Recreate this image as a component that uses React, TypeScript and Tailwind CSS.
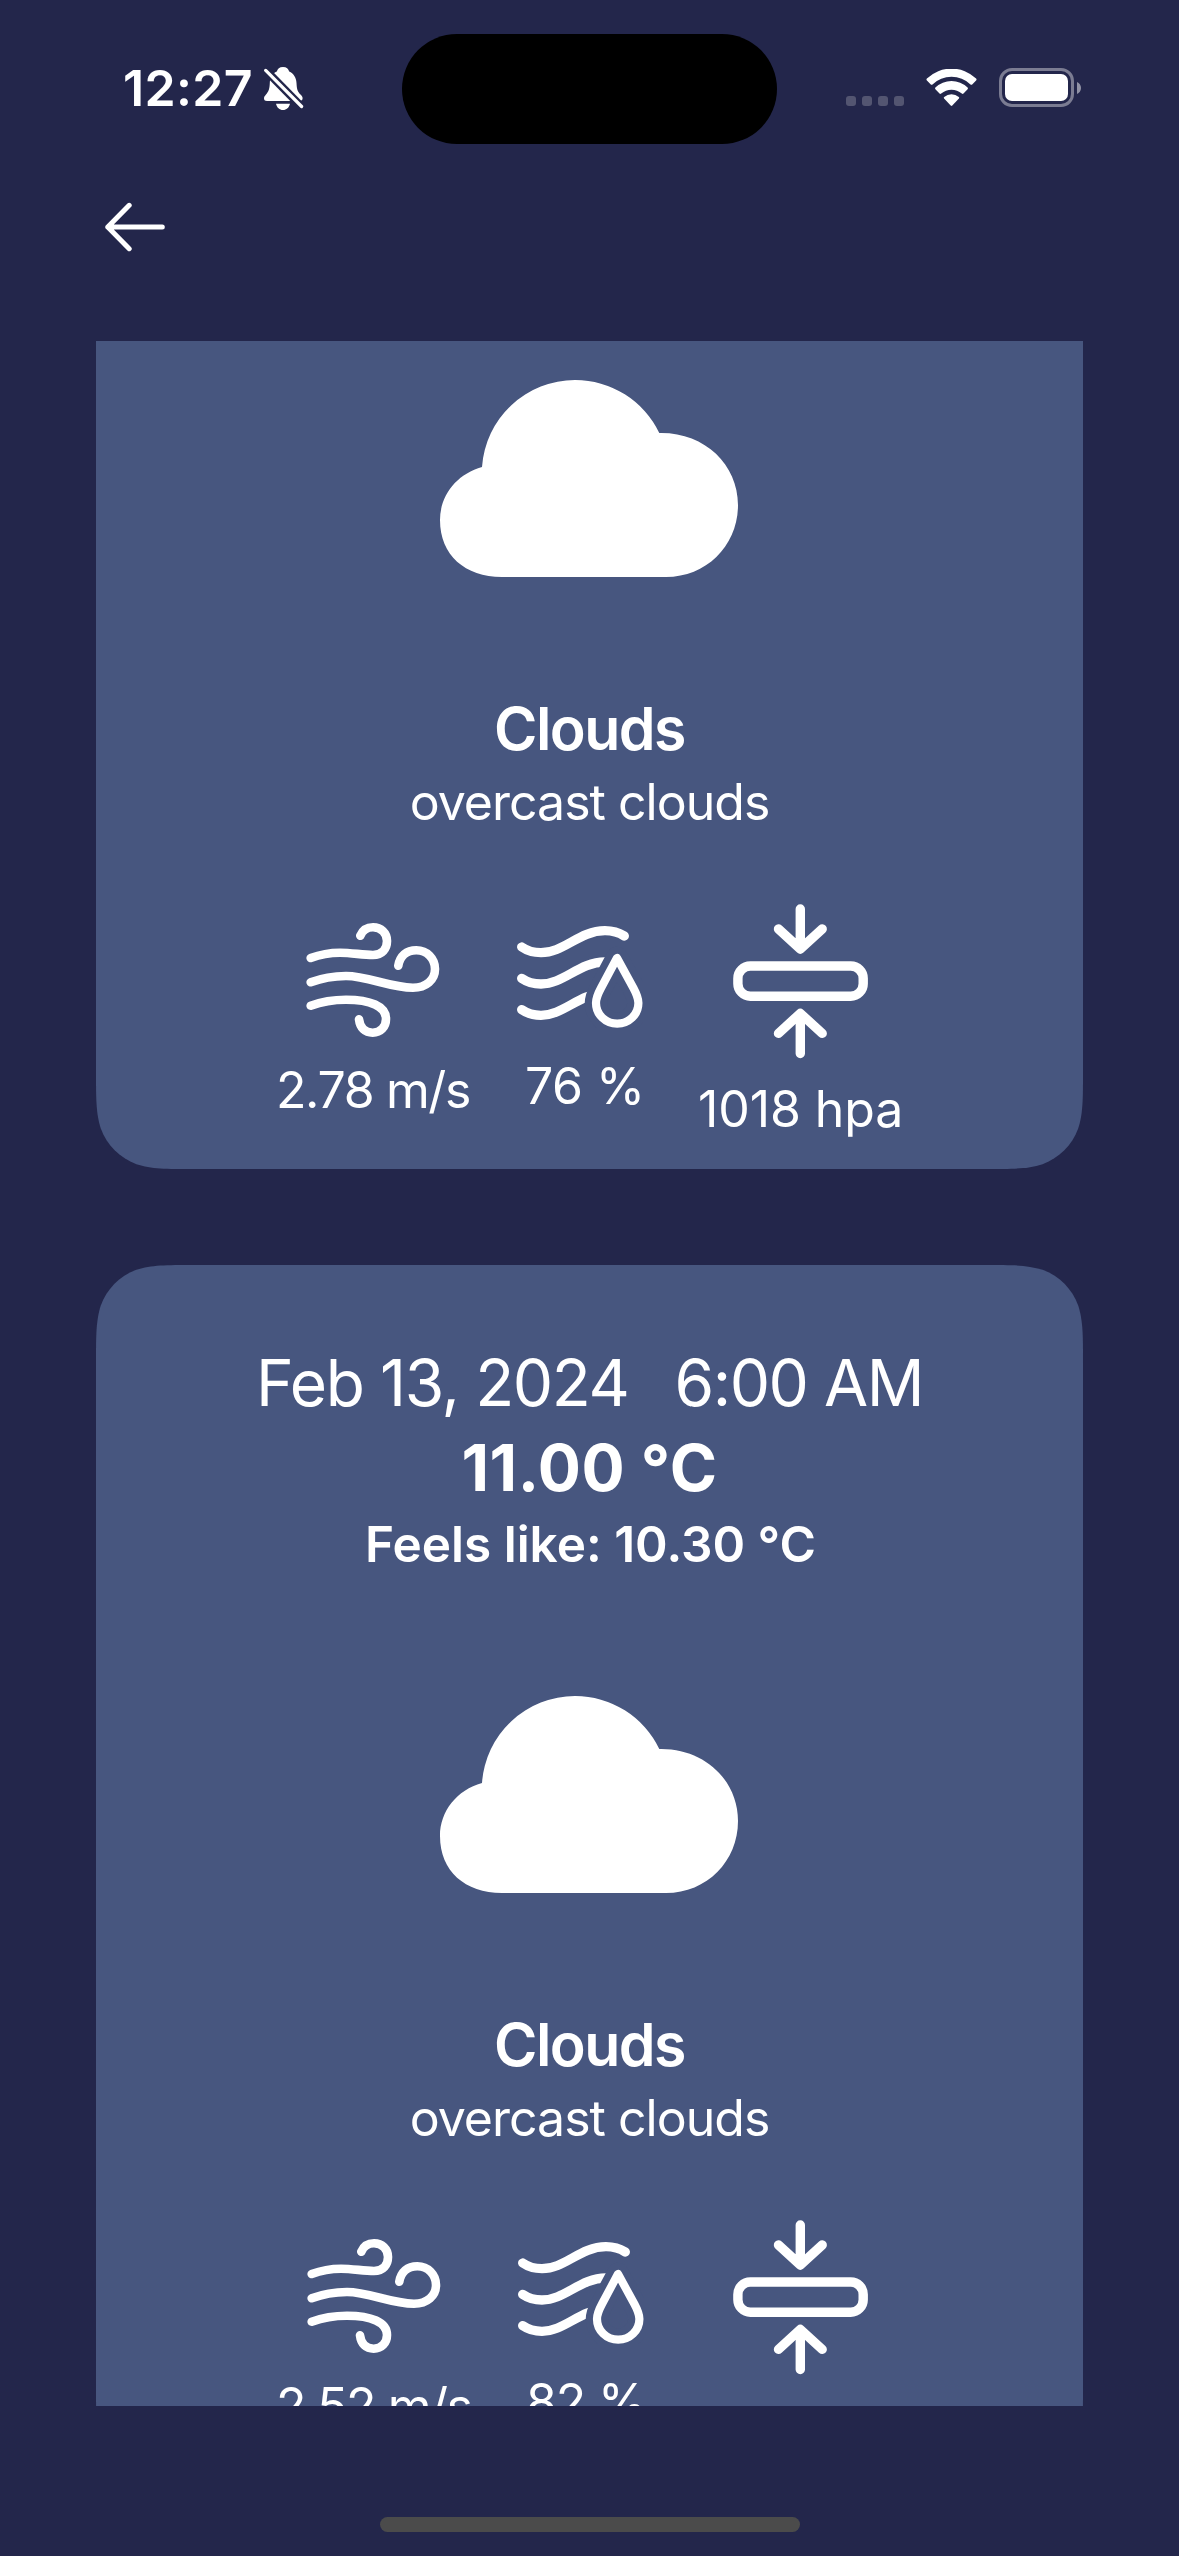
type Summary = {
  date: string
  time: string
  temp: string
  feels: string
}

type Forecast = {
  id: number
  summary?: Summary
  title: string
  detail: string
  wind: string
  humidity: string
  pressure: string
  windIcon: string
  windText: string
  humidityIcon: string
  humidityText: string
}

const forecasts: Forecast[] = [
  {
    id: 1,
    title: 'Clouds',
    detail: 'overcast clouds',
    wind: '2.78 m/s',
    humidity: '76 %',
    pressure: '1018 hpa',
    windIcon: 'ml-[30px]',
    windText: 'tracking-[-1.37px]',
    humidityIcon: 'ml-px',
    humidityText: 'ml-[9px] tracking-[-0.5px]',
  },
  {
    id: 2,
    summary: {
      date: 'Feb 13, 2024',
      time: '6:00 AM',
      temp: '11.00 °C',
      feels: 'Feels like: 10.30 °C',
    },
    title: 'Clouds',
    detail: 'overcast clouds',
    wind: '2.52 m/s',
    humidity: '82 %',
    pressure: '1018 hpa',
    windIcon: 'ml-[31px]',
    windText: 'tracking-[-1.5px]',
    humidityIcon: 'ml-[2px]',
    humidityText: 'ml-[10px] tracking-[-1.2px]',
  },
]

function BellSlash() {
  return (
    <svg className="ml-[11px] h-[43px] w-[40px] shrink-0" viewBox="0 0 40 43">
      <path
        fill="#fff"
        d="M19 0C15.3 0 13.6 2 12.8 4.5C8.5 6.5 6 10.5 5.8 16C5.6 22 4.5 24.5 2 27.5C.5 29.3 0 30 0 31.5C0 33.2 1.2 34 3 34H35.5C37.5 34 38.6 33 38.6 31.3C38.6 30 38 29 36.5 27.5C33.5 24.5 32.8 22 32.5 16C32.3 10.5 29.5 6.5 25.2 4.5C24.4 2 22.7 0 19 0ZM12 36.7H26C25.2 40.5 22.4 43 19 43C15.6 43 12.8 40.5 12 36.7Z"
      />
      <path d="M-2 -.6L41 43.3" stroke="#23264b" strokeWidth="8" />
      <path d="M1.7 3.4L37.6 39.5" stroke="#fff" strokeWidth="3.2" strokeLinecap="round" />
    </svg>
  )
}

function Wifi() {
  return (
    <svg className="h-[38px] w-[51px]" viewBox="0 0 51 38" fill="#fff">
      <path d="M.9 11.4Q0 10.5 .9 9.5A35.5 35.5 0 0 1 50.1 9.5Q51 10.5 50.1 11.4L46.2 15.4Q45.4 16.2 44.5 15.4A27.6 27.6 0 0 0 6.5 15.4Q5.6 16.2 4.8 15.4Z" />
      <path d="M9.4 20.2Q8.6 19.4 9.4 18.5A23.5 23.5 0 0 1 41.6 18.5Q42.4 19.4 41.6 20.2L37.5 24.6Q36.7 25.3 35.8 24.5A15.8 15.8 0 0 0 15.2 24.5Q14.3 25.3 13.5 24.6Z" />
      <path d="M18.1 29.6Q17.3 28.7 18.2 27.9A11.3 11.3 0 0 1 32.8 27.9Q33.7 28.7 32.9 29.6L26.3 36.5Q25.5 37.3 24.7 36.5Z" />
    </svg>
  )
}

function StatusBar() {
  return (
    <header className="flex h-[177px] items-start">
      <div className="flex h-[177px] w-[402px] items-start pl-[123px] pt-[58px]">
        <span className="text-[50px] font-semibold leading-[60px] tracking-[0.35px]">12:27</span>
        <div className="pt-[9px]">
          <BellSlash />
        </div>
      </div>
      <div className="mt-[34px] h-[110px] w-[375px] rounded-full bg-black" />
      <div className="flex pl-[69px] pt-[68px]">
        <div className="mt-[28px] flex gap-[6px]">
          {[0, 1, 2, 3].map((dot) => (
            <span key={dot} className="size-[10px] rounded-[3px] bg-[#535571]" />
          ))}
        </div>
        <div className="ml-[22px] mt-px">
          <Wifi />
        </div>
        <div className="ml-[22px] flex items-center">
          <div className="h-[39px] w-[75px] rounded-[13px] border-[3px] border-[#7b7c92] p-[3px]">
            <div className="h-[27px] w-[63px] rounded-[7px] bg-white" />
          </div>
          <svg className="ml-[3px] h-[12px] w-[4px]" viewBox="0 0 4 12">
            <path d="M0 0C2.3 1 4 3.2 4 6S2.3 11 0 12Z" fill="#9192a5" />
          </svg>
        </div>
      </div>
    </header>
  )
}

function BackArrow() {
  return (
    <svg
      className="h-[50px] w-[62px]"
      viewBox="0 0 62 50"
      fill="none"
      stroke="#fff"
      strokeWidth="5"
      strokeLinecap="round"
      strokeLinejoin="round"
    >
      <path d="M25.2 3.3L3.8 25L25.2 46.7M3.8 25H58.3" />
    </svg>
  )
}

function Cloud() {
  return (
    <svg className="h-[197px] w-[298px]" viewBox="0 0 298 197" fill="#fff">
      <path d="M42 87A93.3 93.3 0 0 1 135 0A93.3 93.3 0 0 1 219.3 53C264 52 298 84 298 125C298 165 267 197 226 197H62C25 197 0 175 0 140C0 115 17 94 42 87Z" />
    </svg>
  )
}

function WindIcon() {
  return (
    <svg
      className="h-[115px] w-[134px]"
      viewBox="0 0 134 115"
      fill="none"
      stroke="#fff"
      strokeWidth="8.6"
      strokeLinecap="round"
    >
      <path d="M4.7 35C14 31.5 24 29.7 34 29.7C46 29.7 56 32 67 32C76 32 81 26 81 18C81 10 75 4.3 67 4.3C61 4.3 56.5 7.5 54.3 12.7" />
      <path d="M4.7 59.3C16 55 28 53 40 53C62 53 84 64.7 107 64.7C120 64.7 129 57 129 46C129 35.5 121 27.3 110.3 27.3C100.5 27.3 94 33 92.3 42.7" />
      <path d="M4.7 82.7C16 78.5 28 76.7 40 76.7C64 76.7 80 83 80 96C80 104 74.5 109.7 66.7 109.7C59 109.7 54 105 53 96.3" />
    </svg>
  )
}

function HumidityIcon() {
  const drop =
    'M100 32L84 62C80.5 68.5 79 72 79 77C79 88.5 88.5 97.7 100.2 97.7C111.9 97.7 121.4 88.5 121.4 77C121.4 72 119.9 68.5 116.4 62Z'
  return (
    <svg
      className="h-[102px] w-[126px]"
      viewBox="0 0 126 102"
      fill="none"
      stroke="#fff"
      strokeWidth="9.3"
      strokeLinecap="round"
      strokeLinejoin="round"
    >
      <path d="M4.7 52.3C10.5 56.3 17 58 24 58C47 58 62 36 88 36" />
      <path d="M4.7 83.6C10.5 87.6 17 89.3 24 89.3C47 89.3 62 67.3 88 67.3" />
      <path d={drop} stroke="#47567f" fill="#47567f" strokeWidth="22.5" />
      <path d="M4.7 21C10.5 25 17 26.7 24 26.7C47 26.7 62 4.7 88 4.7C95 4.7 101.5 6.3 107.3 10" />
      <path d={drop} strokeWidth="8.2" />
    </svg>
  )
}

function PressureIcon() {
  return (
    <svg
      className="h-[155px] w-[135px]"
      viewBox="0 0 135 155"
      fill="none"
      stroke="#fff"
      strokeWidth="9.4"
      strokeLinecap="round"
      strokeLinejoin="round"
    >
      <path d="M67.3 5V44M45.5 25L67.3 45L89.2 25" />
      <rect x="4.9" y="62" width="125.3" height="30.2" rx="12.5" />
      <path d="M67.3 149.5V110M45.5 129.4L67.3 109.4L89.2 129.4" />
    </svg>
  )
}

function ForecastSummary({ summary }: { summary: Summary }) {
  return (
    <>
      <div className="flex gap-[46px] text-[64px] leading-[80px]">
        <span className="tracking-[-1.38px]">{summary.date}</span>
        <span className="tracking-[-1.45px]">{summary.time}</span>
      </div>
      <p className="mt-[5px] text-[64px] font-bold leading-[80px] tracking-[0.55px]">{summary.temp}</p>
      <p className="mt-[6px] pl-[2px] text-[49.5px] font-semibold leading-[60px]">{summary.feels}</p>
    </>
  )
}

function ForecastCard({ item }: { item: Forecast }) {
  return (
    <article className="flex h-[1220px] w-[987px] shrink-0 flex-col items-center whitespace-nowrap bg-[#47567f] pt-[78px] [clip-path:path('M97.8,0L889.2,0C917.3,0,931.4,0,946.6,4.8C963.1,10.8,976.2,23.9,982.2,40.4C987,55.6,987,69.7,987,97.8L987,1122.2C987,1150.3,987,1164.4,982.2,1179.6C976.2,1196.1,963.1,1209.2,946.6,1215.2C931.4,1220,917.3,1220,889.2,1220L97.8,1220C69.7,1220,55.6,1220,40.4,1215.2C23.9,1209.2,10.8,1196.1,4.8,1179.6C0,1164.4,0,1150.3,0,1122.2L0,97.8C0,69.7,0,55.6,4.8,40.4C10.8,23.9,23.9,10.8,40.4,4.8C55.6,0,69.7,0,97.8,0Z')]">
      <div className="flex h-[231px] flex-col items-center">
        {item.summary && <ForecastSummary summary={item.summary} />}
      </div>
      <div className="mr-px mt-[122px]">
        <Cloud />
      </div>
      <h2 className="mt-[116px] text-[59px] font-semibold leading-[72px] tracking-[-1.56px]">{item.title}</h2>
      <p className="mt-[7px] text-[50px] leading-[60px] tracking-[-0.98px]">{item.detail}</p>
      <div className="mt-[72px] flex w-full items-start pl-[180px] text-[50px] leading-[60px]">
        <div className="flex w-[240px] flex-col items-start pt-[19px]">
          <div className={item.windIcon}>
            <WindIcon />
          </div>
          <span className={`mt-[22px] ${item.windText}`}>{item.wind}</span>
        </div>
        <div className="flex w-[180px] flex-col items-start pt-[22px]">
          <div className={item.humidityIcon}>
            <HumidityIcon />
          </div>
          <span className={`mt-[28px] ${item.humidityText}`}>{item.humidity}</span>
        </div>
        <div className="flex flex-col items-start">
          <div className="ml-[37px]">
            <PressureIcon />
          </div>
          <span className="ml-[2px] mt-[20px] tracking-[-0.1px]">{item.pressure}</span>
        </div>
      </div>
    </article>
  )
}

export default function App() {
  return (
    <div className="flex h-[2556px] w-[1179px] flex-col overflow-hidden bg-[#23264b] font-['Inter',sans-serif] text-white">
      <StatusBar />
      <nav className="h-[164px] pl-[104px] pt-[25px]">
        <BackArrow />
      </nav>
      <main className="flex h-[2065px] flex-col items-center overflow-hidden">
        <div className="-mt-[392px] flex flex-col gap-[96px]">
          {forecasts.map((item) => (
            <ForecastCard key={item.id} item={item} />
          ))}
        </div>
      </main>
      <footer className="flex justify-center pt-[111px]">
        <div className="h-[15px] w-[420px] rounded-full bg-[#4b4b4b]" />
      </footer>
    </div>
  )
}
